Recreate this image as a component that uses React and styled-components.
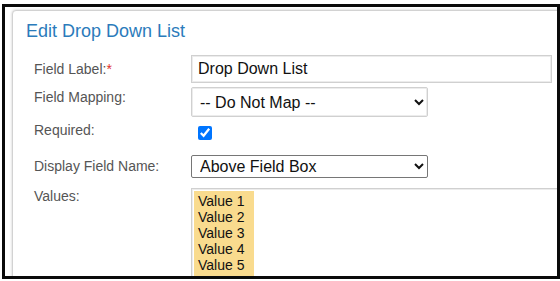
import React from 'react';
import styled, { createGlobalStyle } from 'styled-components';

const GlobalStyle = createGlobalStyle`
  body {
    margin: 0;
    background: #fff;
    font-family: "Liberation Sans", Arial, sans-serif;
  }
`;

const Frame = styled.div`
  box-sizing: border-box;
  width: 558px;
  height: 275px;
  margin: 4px 0 2px 2px;
  border: 3px solid #0a0a0a;
  overflow: hidden;
  background: #fff;
`;

const Panel = styled.div`
  width: 640px;
  margin: 3px 0 0 7px;
  padding: 10px 0 0 13px;
  border: 1px solid #d2d2d2;
  border-radius: 4px;
  box-shadow: 0 0 3px rgba(0, 0, 0, 0.22);
  background: #fff;
`;

const Title = styled.h2`
  margin: 0 0 13px;
  font-size: 18px;
  line-height: 21px;
  font-weight: normal;
  color: #2b7bbb;
`;

const Form = styled.div`
  display: flex;
  flex-direction: column;
  gap: 4px;
  padding-left: 8px;
`;

const Row = styled.div`
  display: flex;
  align-items: flex-start;
  min-height: ${(p) => p.h || 0}px;
`;

const Label = styled.label`
  width: 157px;
  flex: none;
  padding-top: ${(p) => p.pt || 0}px;
  font-size: 14px;
  line-height: 16px;
  color: #555;
`;

const Star = styled.span`
  color: #e0312c;
`;

const TextInput = styled.input`
  box-sizing: border-box;
  width: 361px;
  height: 28px;
  padding: 0 6px;
  border: 1px solid #d0d0d0;
  box-shadow: inset 0 0 0 1px #ececec;
  font: 16px "Liberation Sans", Arial, sans-serif;
  color: #111;
  outline: none;
`;

const Select = styled.select`
  box-sizing: border-box;
  width: 237px;
  height: ${(p) => (p.muted ? 30 : 23)}px;
  padding: 0 4px;
  border: 1px solid ${(p) => (p.muted ? '#d0d0d0' : '#767676')};
  box-shadow: ${(p) => (p.muted ? 'inset 0 0 0 1px #ececec' : 'none')};
  border-radius: 2px;
  background: #fff;
  font: 16px "Liberation Sans", Arial, sans-serif;
  color: #111;
`;

const Check = styled.input`
  width: 14px;
  height: 14px;
  margin: 5px 0 0 7px;
  accent-color: #0075ff;
`;

const ValuesBox = styled.div`
  box-sizing: border-box;
  width: 400px;
  height: 110px;
  padding: 2px;
  border: 1px solid #d0d0d0;
  box-shadow: inset 0 0 0 1px #ececec;
`;

const Highlight = styled.div`
  width: 56px;
  padding: 3px 0 4px 4px;
  background: #f9db8e;
  font-size: 14px;
  line-height: 15.9px;
  color: #111;
`;

const values = ['Value 1', 'Value 2', 'Value 3', 'Value 4', 'Value 5'];

const App = () => {
  return (
    <>
      <GlobalStyle />
      <Frame>
        <Panel>
          <Title>Edit Drop Down List</Title>
          <Form>
            <Row h={28}>
              <Label pt={6}>
                Field Label:<Star>*</Star>
              </Label>
              <TextInput defaultValue="Drop Down List" />
            </Row>
            <Row h={30}>
              <Label pt={2}>Field Mapping:</Label>
              <Select muted defaultValue="none">
                <option value="none">-- Do Not Map --</option>
              </Select>
            </Row>
            <Row h={30}>
              <Label pt={1}>Required:</Label>
              <Check type="checkbox" defaultChecked />
            </Row>
            <Row h={29}>
              <Label pt={3}>Display Field Name:</Label>
              <Select defaultValue="above">
                <option value="above">Above Field Box</option>
              </Select>
            </Row>
            <Row>
              <Label>Values:</Label>
              <ValuesBox>
                <Highlight>
                  {values.map((v) => (
                    <div key={v}>{v}</div>
                  ))}
                </Highlight>
              </ValuesBox>
            </Row>
          </Form>
        </Panel>
      </Frame>
    </>
  );
};

export default App;
